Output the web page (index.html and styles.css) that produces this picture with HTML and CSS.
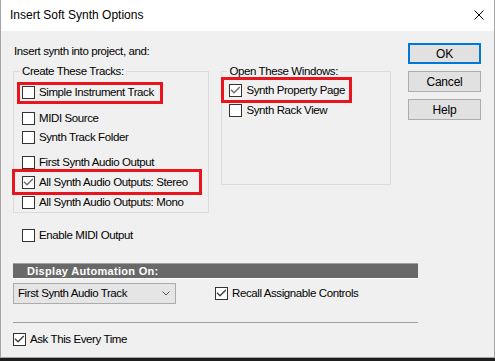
FILE: index.html
```html
<!DOCTYPE html>
<html>
<head>
<meta charset="utf-8">
<title>Insert Soft Synth Options</title>
<link rel="stylesheet" href="styles.css">
</head>
<body>
<div class="screen">
  <div class="window">
    <div class="titlebar">
      <span class="title">Insert Soft Synth Options</span>
      <svg class="close" width="10" height="10" viewBox="0 0 10 10"><path d="M0.5 0.5 L9.5 9.5 M9.5 0.5 L0.5 9.5" stroke="#000" stroke-width="1" fill="none"/></svg>
    </div>
    <div class="body">
      <div class="top">
        <div class="main">
          <p class="intro">Insert synth into project, and:</p>
          <div class="groups">
            <fieldset class="group tracks">
              <legend>Create These Tracks:</legend>
              <div class="hl hl-simple">
                <label class="cbrow"><span class="cb"></span>Simple Instrument Track</label>
              </div>
              <label class="cbrow r-midi"><span class="cb"></span>MIDI Source</label>
              <label class="cbrow r-folder"><span class="cb"></span>Synth Track Folder</label>
              <label class="cbrow r-first"><span class="cb"></span>First Synth Audio Output</label>
              <div class="hl hl-stereo">
                <label class="cbrow"><span class="cb checked"><svg viewBox="0 0 11 11" width="11" height="11"><polyline points="1,4.8 4,7.8 9.8,2" fill="none" stroke="#6f6f6f" stroke-width="1.5"/></svg></span>All Synth Audio Outputs: Stereo</label>
              </div>
              <label class="cbrow r-mono"><span class="cb"></span>All Synth Audio Outputs: Mono</label>
            </fieldset>
            <fieldset class="group windows">
              <legend>Open These Windows:</legend>
              <div class="hl hl-prop">
                <label class="cbrow"><span class="cb checked"><svg viewBox="0 0 11 11" width="11" height="11"><polyline points="1,4.8 4,7.8 9.8,2" fill="none" stroke="#6f6f6f" stroke-width="1.5"/></svg></span>Synth Property Page</label>
              </div>
              <label class="cbrow r-rack"><span class="cb"></span>Synth Rack View</label>
            </fieldset>
          </div>
          <label class="cbrow r-enable"><span class="cb"></span>Enable MIDI Output</label>
        </div>
        <div class="buttons">
          <button class="btn default">OK</button>
          <button class="btn">Cancel</button>
          <button class="btn">Help</button>
        </div>
      </div>
      <div class="bottom">
        <div class="bar">Display Automation On:</div>
        <div class="auto-row">
          <div class="select"><span>First Synth Audio Track</span><svg width="8" height="5" viewBox="0 0 8 5"><polyline points="0.5,0.5 4,4 7.5,0.5" fill="none" stroke="#555" stroke-width="1"/></svg></div>
          <label class="cbrow r-recall"><span class="cb checked"><svg viewBox="0 0 11 11" width="11" height="11"><polyline points="1,4.8 4,7.8 9.8,2" fill="none" stroke="#444" stroke-width="1.5"/></svg></span>Recall Assignable Controls</label>
        </div>
        <div class="sep"></div>
        <label class="cbrow r-ask"><span class="cb checked"><svg viewBox="0 0 11 11" width="11" height="11"><polyline points="1,4.8 4,7.8 9.8,2" fill="none" stroke="#444" stroke-width="1.5"/></svg></span>Ask This Every Time</label>
      </div>
    </div>
  </div>
  <div class="taskbar"></div>
</div>
</body>
</html>
```

FILE: styles.css
```css
html, body {
  margin: 0;
  padding: 0;
  background: #1e1e1e;
}
.screen {
  width: 495px;
  height: 361px;
  overflow: hidden;
  font-family: "Liberation Sans", Arial, sans-serif;
  font-size: 11.5px;
  letter-spacing: -0.4px;
  color: #000;
}
.window {
  box-sizing: border-box;
  width: 495px;
  height: 358px;
  background: #f0f0f0;
  border: 1px solid #a4a4a4;
  border-top: none;
  display: flex;
  flex-direction: column;
}
.titlebar {
  height: 31px;
  background: #fff;
  display: flex;
  align-items: center;
  justify-content: space-between;
  padding: 0 10px 0 9px;
  flex: none;
}
.title {
  font-family: "Liberation Sans", Arial, sans-serif;
  font-size: 12px;
  letter-spacing: 0;
  line-height: 16px;
  margin-top: -1px;
}
.close {
  display: block;
  margin-top: -1px;
}
.body {
  padding: 0 13px 0 12px;
}
.top {
  display: flex;
  justify-content: space-between;
  align-items: flex-start;
}
.main {
  width: 378px;
}
.intro {
  margin: 14px 0 0 1px;
  line-height: 13px;
  height: 13px;
}
.groups {
  display: flex;
  gap: 12px;
  align-items: flex-start;
  margin-top: 6px;
}
.group {
  box-sizing: border-box;
  margin: 0;
  border: 1px solid #dcdcdc;
  padding: 0 0 0 8px;
  min-width: 0;
}
.group legend {
  padding: 0 2px;
  margin-left: -2px;
  line-height: 14px;
  height: 14px;
}
.tracks {
  width: 197px;
  height: 149px;
}
.windows {
  width: 170px;
  height: 121px;
  padding-left: 7px;
}
.cbrow {
  display: flex;
  align-items: center;
  gap: 4px;
  height: 13px;
  line-height: 13px;
  white-space: nowrap;
}
.cb {
  box-sizing: border-box;
  width: 13px;
  height: 13px;
  border: 1px solid #333;
  background: #fff;
  flex: none;
  display: block;
}
.cb svg {
  display: block;
}
.hl {
  box-sizing: border-box;
  border: 3px solid #e8151e;
}
.hl-simple {
  width: 146px;
  height: 22px;
  margin: 4px 0 -5px -5px;
  padding: 1px 0 0 2px;
}
.r-midi { margin-top: 13px; }
.r-folder { margin-top: 6px; }
.r-first { margin-top: 12px; }
.hl-stereo {
  width: 190px;
  height: 26px;
  margin: 0 0 -6px -10px;
  padding: 4px 0 0 7px;
}
.r-mono { margin-top: 7px; }
.hl-prop {
  width: 131px;
  height: 26px;
  margin: -1px 0 -6px -8px;
  padding: 4px 0 0 5px;
}
.r-rack { margin-top: 7px; }
.r-enable {
  margin: 16px 0 0 9px;
}
.buttons {
  width: 73px;
  margin-top: 12px;
  display: flex;
  flex-direction: column;
  gap: 7px;
}
.btn {
  box-sizing: border-box;
  height: 21px;
  width: 73px;
  margin: 0;
  padding: 0;
  background: #e1e1e1;
  border: 1px solid #adadad;
  font-family: inherit;
  font-size: 12px;
  letter-spacing: -0.2px;
  color: #000;
}
.btn.default {
  border: 2px solid #0078d7;
}
.bottom {
  width: 405px;
  margin-top: 21px;
}
.bar {
  height: 14px;
  line-height: 14px;
  background: #696969;
  border-top: 1px solid #a0a0a0;
  border-bottom: 1px solid #fff;
  color: #fff;
  font-family: "Liberation Sans", Arial, sans-serif;
  font-weight: bold;
  font-size: 11px;
  letter-spacing: 0.3px;
  padding-left: 14px;
}
.auto-row {
  display: flex;
  align-items: center;
  margin-top: 4px;
  height: 21px;
}
.select {
  box-sizing: border-box;
  width: 163px;
  height: 21px;
  background: #e5e5e5;
  border: 1px solid #acacac;
  display: flex;
  align-items: center;
  justify-content: space-between;
  padding: 0 5px 0 4px;
  line-height: 13px;
}
.select svg {
  display: block;
}
.r-recall {
  margin-left: 39px;
}
.sep {
  height: 1px;
  background: #a0a0a0;
  margin-top: 18px;
}
.r-ask {
  margin-top: 10px;
}
.taskbar {
  height: 3px;
  background: #1e1e1e;
}
```
